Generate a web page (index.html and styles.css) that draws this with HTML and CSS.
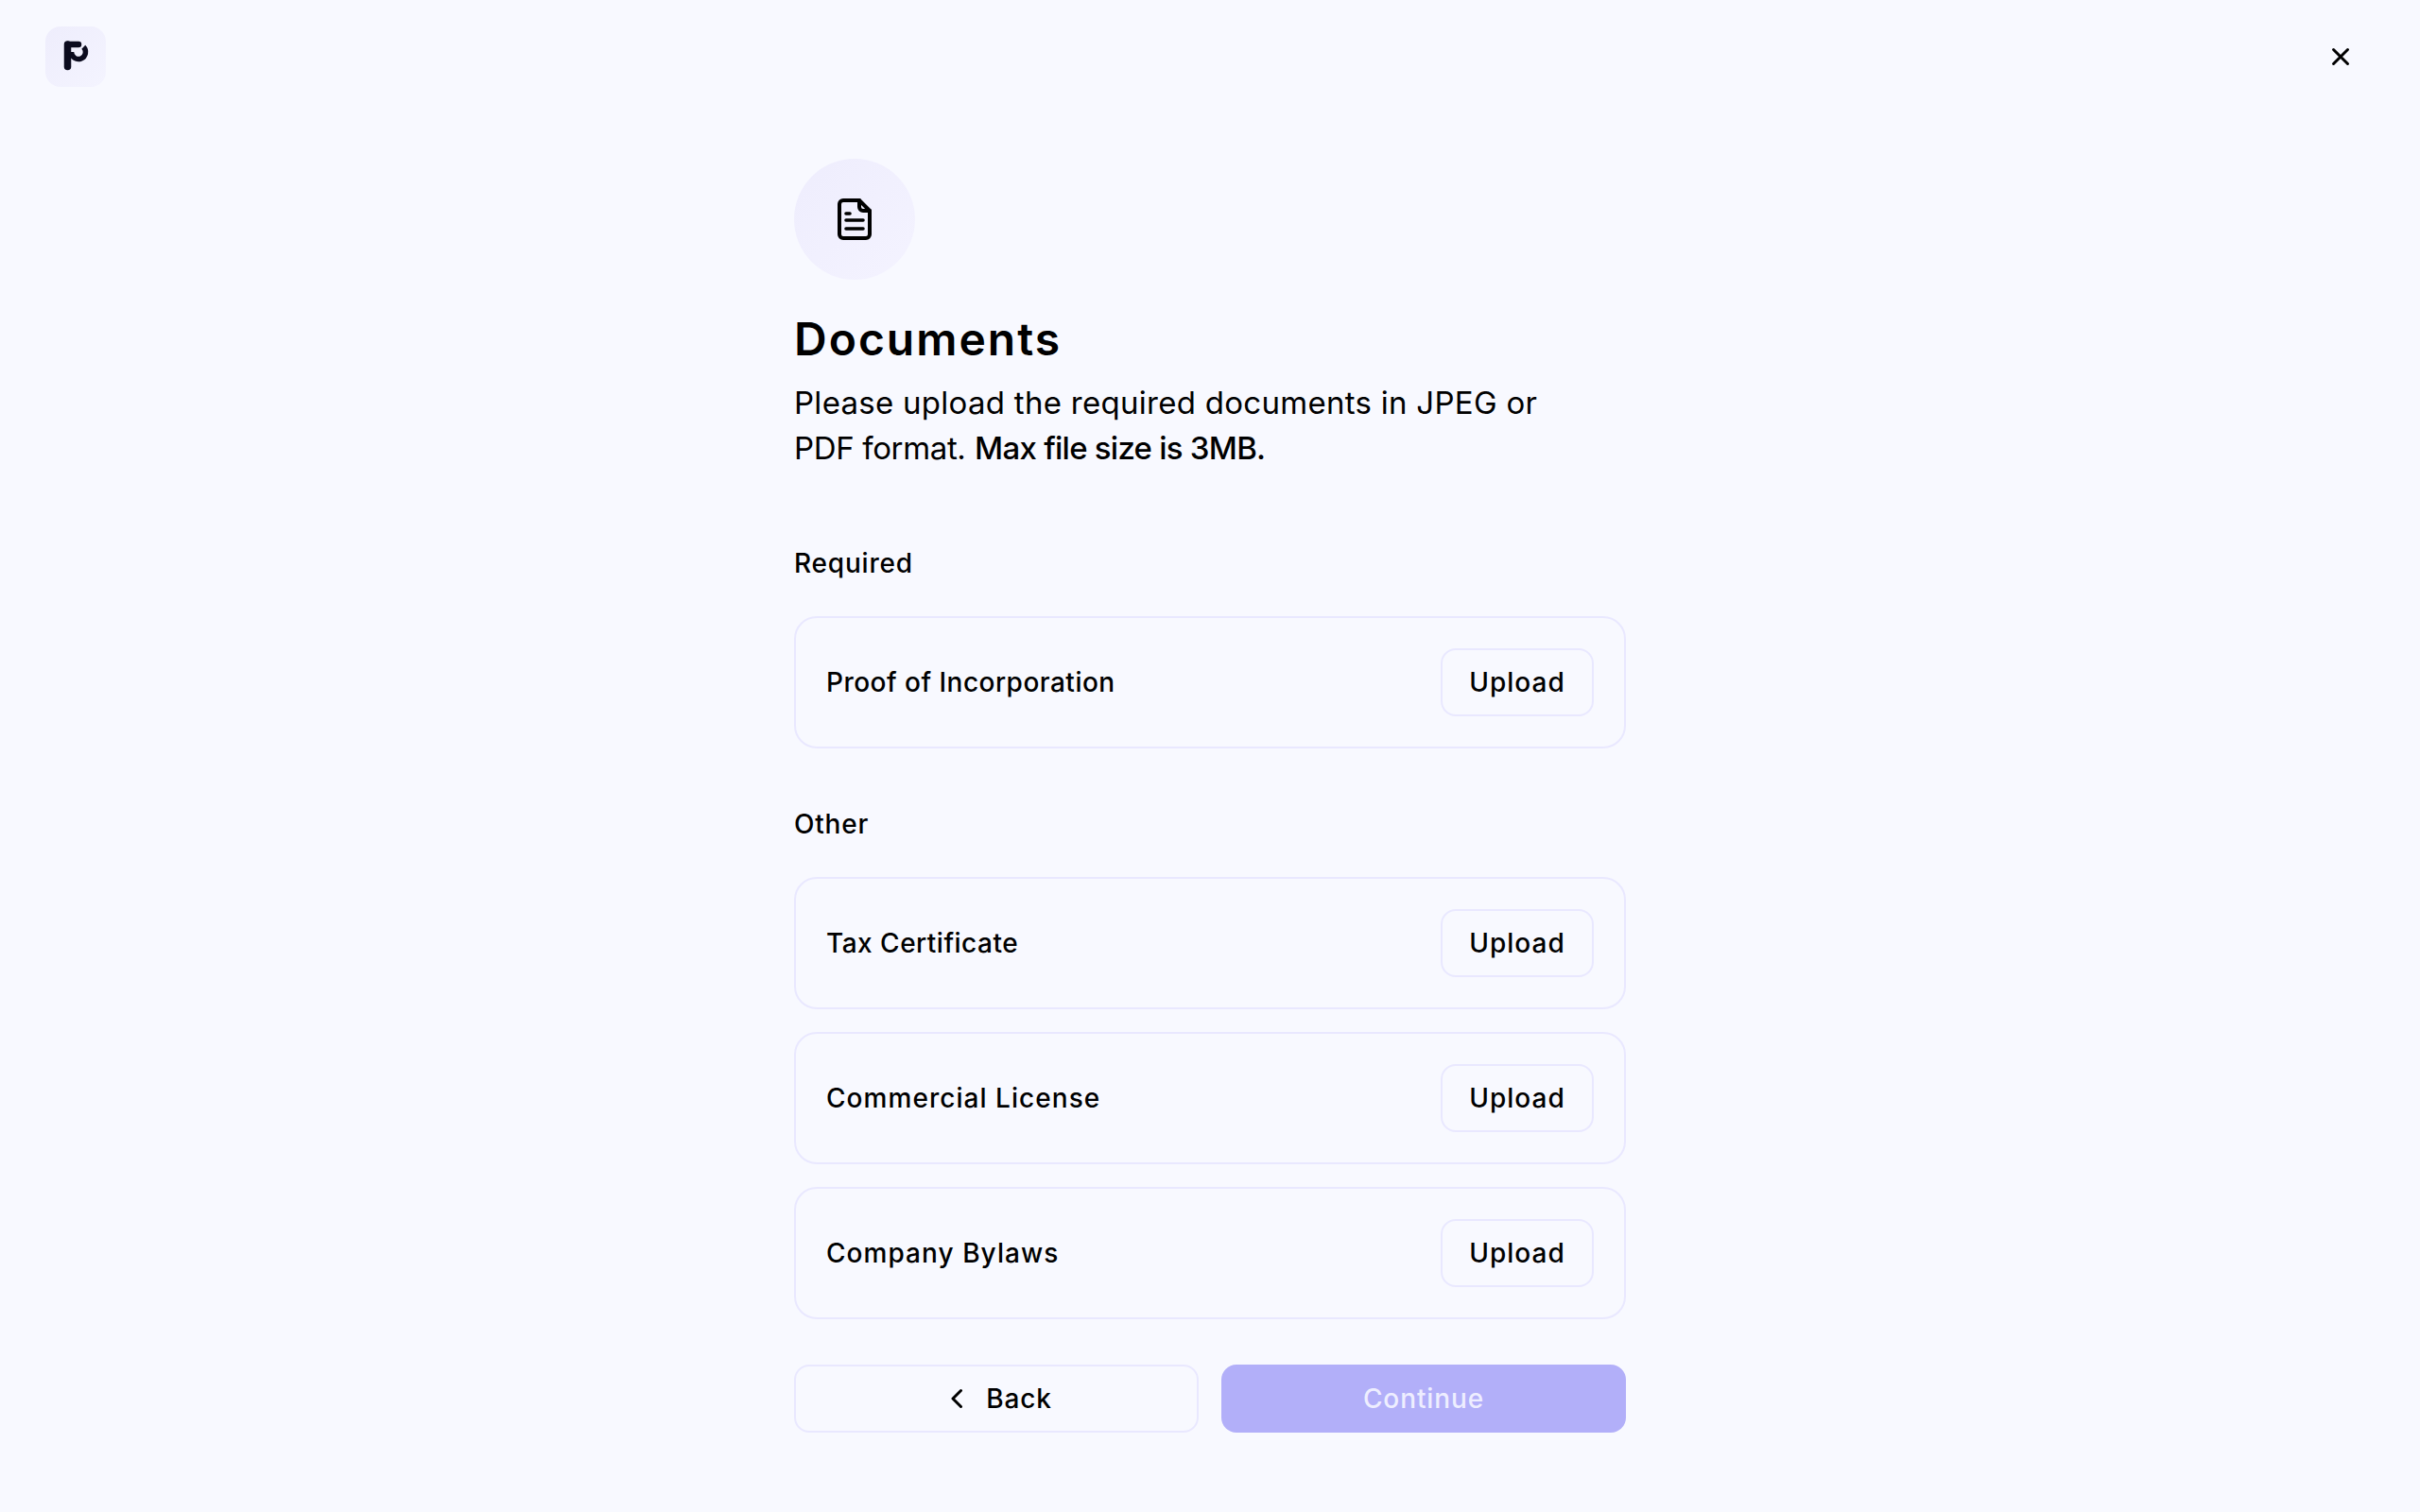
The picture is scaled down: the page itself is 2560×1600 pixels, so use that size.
FILE: index.html
```html
<!DOCTYPE html>
<html lang="en">
<head>
<meta charset="utf-8">
<title>Documents</title>
<link rel="stylesheet" href="styles.css">
</head>
<body>
<header class="topbar">
  <div class="logo">
    <svg width="64" height="64" viewBox="0 0 64 64" fill="none">
      <path d="M23.5 19V42.5" stroke="#0b0b1e" stroke-width="7.5" stroke-linecap="round"/>
      <path d="M23.5 19H35" stroke="#0b0b1e" stroke-width="6.5" stroke-linecap="round"/>
      <path d="M40.3 21.7A7.5 7.5 0 1 1 27.5 27" stroke="#0b0b1e" stroke-width="5.5"/>
    </svg>
  </div>
  <button class="close" aria-label="Close">
    <svg width="40" height="40" viewBox="0 0 40 40" fill="none">
      <path d="M12.5 12.5L27.5 27.5M27.5 12.5L12.5 27.5" stroke="#000" stroke-width="3" stroke-linecap="round"/>
    </svg>
  </button>
</header>
<main class="content">
  <div class="circle">
    <svg width="48" height="48" viewBox="0 0 48 48" fill="none" stroke="#000" stroke-width="4" stroke-linecap="round" stroke-linejoin="round">
      <path d="M12 4H29L40 15V40A4 4 0 0 1 36 44H12A4 4 0 0 1 8 40V8A4 4 0 0 1 12 4Z"/>
      <path d="M29 4V11A4 4 0 0 0 33 15H40"/>
      <path d="M15 18H19M15 25H33M15 34H33" stroke-width="3.6"/>
    </svg>
  </div>
  <h1 class="title">Documents</h1>
  <p class="lead">Please upload the required documents in JPEG or<br><span class="lead-tight">PDF format.</span> <strong>Max file size is 3MB.</strong></p>

  <h2 class="section first">Required</h2>
  <div class="row"><span class="name tight">Proof of Incorporation</span><button class="upload">Upload</button></div>

  <h2 class="section">Other</h2>
  <div class="list">
    <div class="row"><span class="name tight">Tax Certificate</span><button class="upload">Upload</button></div>
    <div class="row"><span class="name">Commercial License</span><button class="upload">Upload</button></div>
    <div class="row"><span class="name">Company Bylaws</span><button class="upload">Upload</button></div>
  </div>

  <div class="actions">
    <button class="btn back">
      <svg width="32" height="32" viewBox="0 0 32 32" fill="none"><path d="M21.5 7.5L13 16L21.5 24.5" stroke="#000" stroke-width="3" stroke-linecap="round" stroke-linejoin="round"/></svg>
      Back
    </button>
    <button class="btn continue">Continue</button>
  </div>
</main>
</body>
</html>
```
FILE: styles.css
```css
* { box-sizing: border-box; }
html, body { margin: 0; height: 100%; }
body {
  background: #f8f9ff;
  color: #000;
  font-family: "Inter", "Liberation Sans", sans-serif;
}
button { font-family: inherit; cursor: pointer; }
.topbar {
  height: 168px;
  padding: 28px 64px 0 48px;
  display: flex;
  justify-content: space-between;
  align-items: flex-start;
}
.logo {
  width: 64px;
  height: 64px;
  border-radius: 16px;
  background: linear-gradient(135deg, #eeedfc, #f4f4ff);
  display: flex;
}
.close {
  width: 40px;
  height: 40px;
  padding: 0;
  margin-top: 12px;
  background: none;
  border: 0;
  display: flex;
}
.content {
  width: 880px;
  margin: 0 auto;
  display: flex;
  flex-direction: column;
}
.circle {
  width: 128px;
  height: 128px;
  border-radius: 50%;
  background: linear-gradient(135deg, #eeedfd, #f4f3ff);
  display: flex;
  align-items: center;
  justify-content: center;
}
.title {
  margin: 27px 0 0;
  font-size: 48px;
  line-height: 72px;
  font-weight: 600;
  letter-spacing: 2px;
}
.lead {
  margin: 7px 0 0;
  font-size: 33px;
  line-height: 48px;
  font-weight: 400;
  letter-spacing: 0.28px;
}
.lead-tight { letter-spacing: -0.35px; }
.lead strong { font-weight: 500; letter-spacing: -0.75px; }
.section {
  margin: 59px 0 35px;
  font-size: 28px;
  line-height: 42px;
  font-weight: 500;
  letter-spacing: 0.8px;
}
.section.first { margin-top: 77px; }
.list {
  display: flex;
  flex-direction: column;
  gap: 24px;
}
.row {
  height: 140px;
  padding: 0 32px;
  border: 2px solid #e9e8ff;
  border-radius: 24px;
  display: flex;
  align-items: center;
  justify-content: space-between;
}
.name {
  font-size: 28px;
  font-weight: 500;
  letter-spacing: 1.05px;
}
.name.tight { letter-spacing: 0.48px; }
.upload {
  width: 162px;
  height: 72px;
  padding: 0;
  background: none;
  border: 2px solid #e9e8ff;
  border-radius: 16px;
  font-size: 28px;
  font-weight: 500;
  letter-spacing: 1px;
  color: #000;
}
.actions {
  margin-top: 48px;
  display: grid;
  grid-template-columns: 1fr 1fr;
  gap: 24px;
}
.btn {
  height: 72px;
  border-radius: 16px;
  font-size: 28px;
  font-weight: 500;
  letter-spacing: 0.9px;
  display: flex;
  align-items: center;
  justify-content: center;
}
.back {
  background: none;
  border: 2px solid #e9e8ff;
  color: #000;
  gap: 16px;
}
.continue {
  background: #b2aff9;
  border: 0;
  color: #eeeeff;
}
```
